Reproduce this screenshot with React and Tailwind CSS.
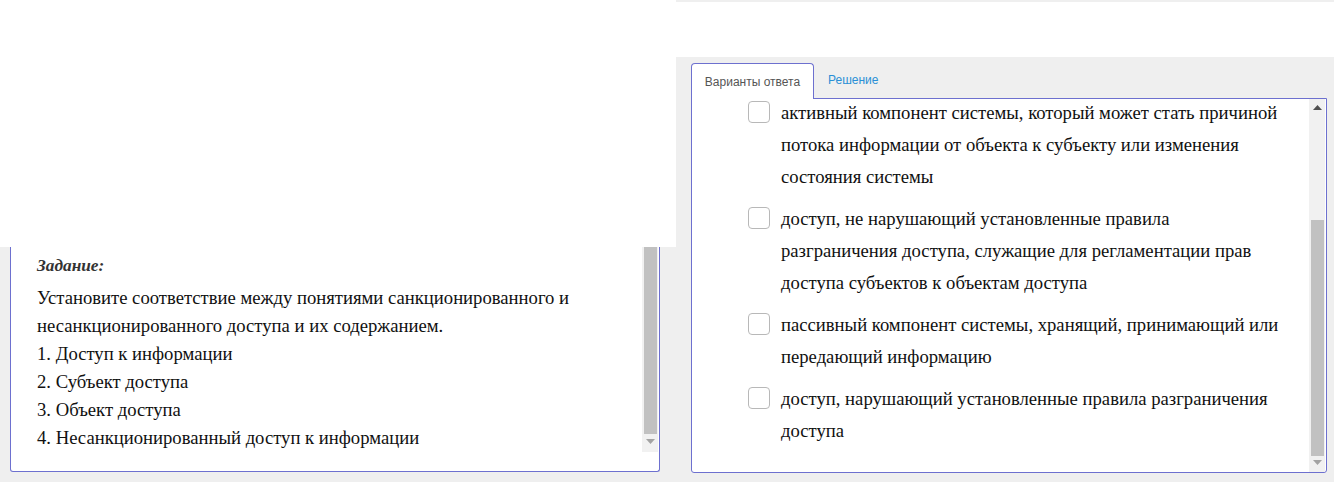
import React from "react";

function UpArrow() {
  return (
    <svg width="9" height="5" viewBox="0 0 9 5">
      <path d="M0 5 L4.5 0 L9 5 Z" fill="#505050" />
    </svg>
  );
}
function DownArrow() {
  return (
    <svg width="9" height="5" viewBox="0 0 9 5">
      <path d="M0 0 L4.5 5 L9 0 Z" fill="#a3a3a3" />
    </svg>
  );
}

const options = [
  [
    "активный компонент системы, который может стать причиной",
    "потока информации от объекта к субъекту или изменения",
    "состояния системы",
  ],
  [
    "доступ, не нарушающий установленные правила",
    "разграничения доступа, служащие для регламентации прав",
    "доступа субъектов к объектам доступа",
  ],
  ["пассивный компонент системы, хранящий, принимающий или", "передающий информацию"],
  ["доступ, нарушающий установленные правила разграничения", "доступа"],
];

export default function App() {
  return (
    <div className="w-[1334px] h-[482px] bg-[#efefef] flex overflow-hidden">
      {/* Left column */}
      <div className="w-[676px] flex flex-col">
        <div className="h-[247px] bg-white" />
        <div className="pl-[10px] pr-[16px]">
          <div className="h-[225px] bg-white border-x border-b border-[#6d70cf] rounded-b-[3px] flex">
            <div className="flex-1 pl-[26px] pt-[8px] text-[#111] font-['Liberation_Serif','Times_New_Roman',serif]">
              <div className="text-[17.3px] italic font-bold text-[#333] leading-[22px] h-[22px]">Задание:</div>
              <div className="mt-[7px] text-[18.67px] leading-[28px]">
                <div>Установите соответствие между понятиями санкционированного и</div>
                <div>несанкционированного доступа и их содержанием.</div>
                <div>1. Доступ к информации</div>
                <div>2. Субъект доступа</div>
                <div>3. Объект доступа</div>
                <div>4. Несанкционированный доступ к информации</div>
              </div>
            </div>
            <div className="w-[16px] mr-[1px] h-[205px] bg-[#f1f1f1] flex flex-col items-center">
              <div className="w-[13px] h-[187px] bg-[#c1c1c1]" />
              <div className="mt-[5px]">
                <DownArrow />
              </div>
            </div>
          </div>
        </div>
      </div>

      {/* Right column */}
      <div className="flex-1 flex flex-col">
        <div className="h-[2px]" />
        <div className="h-[55px] bg-white" />
        <div className="pl-[15px] pr-[7px] pt-[5px]">
          <div className="flex items-end h-[36px] font-['Liberation_Sans',Arial,sans-serif]">
            <div className="relative z-10 w-[123px] h-[36px] bg-white border border-b-0 border-[#6d70cf] rounded-t-[4px] flex items-center justify-center text-[12px] text-[#555] -mb-px">
              Варианты ответа
            </div>
            <div className="h-[36px] flex items-center pl-[14px] text-[12px] text-[#2a8fd6]">Решение</div>
          </div>
          <div className="h-[375px] bg-white border border-[#6d70cf] rounded-b-[3px] flex overflow-hidden">
            <div className="flex-1 pl-[56px] -mt-[2px] text-[18.67px] leading-[32px] text-[#111] font-['Liberation_Serif','Times_New_Roman',serif]">
              {options.map((lines, i) => (
                <div key={i} className={i === 0 ? "flex" : "flex mt-[10px]"}>
                  <div className="w-[22px] h-[22px] mt-[4px] border border-[#b8b8b8] rounded-[4px] bg-white shrink-0" />
                  <div className="ml-[11px]">
                    {lines.map((l, j) => (
                      <div key={j}>{l}</div>
                    ))}
                  </div>
                </div>
              ))}
            </div>
            <div className="w-[16px] mr-[1px] h-[373px] bg-[#f1f1f1] flex flex-col items-center">
              <div className="mt-[6px]">
                <UpArrow />
              </div>
              <div className="w-[13px] h-[236px] bg-[#c1c1c1] mt-[110px]" />
              <div className="mt-[4px]">
                <DownArrow />
              </div>
            </div>
          </div>
        </div>
      </div>
    </div>
  );
}
